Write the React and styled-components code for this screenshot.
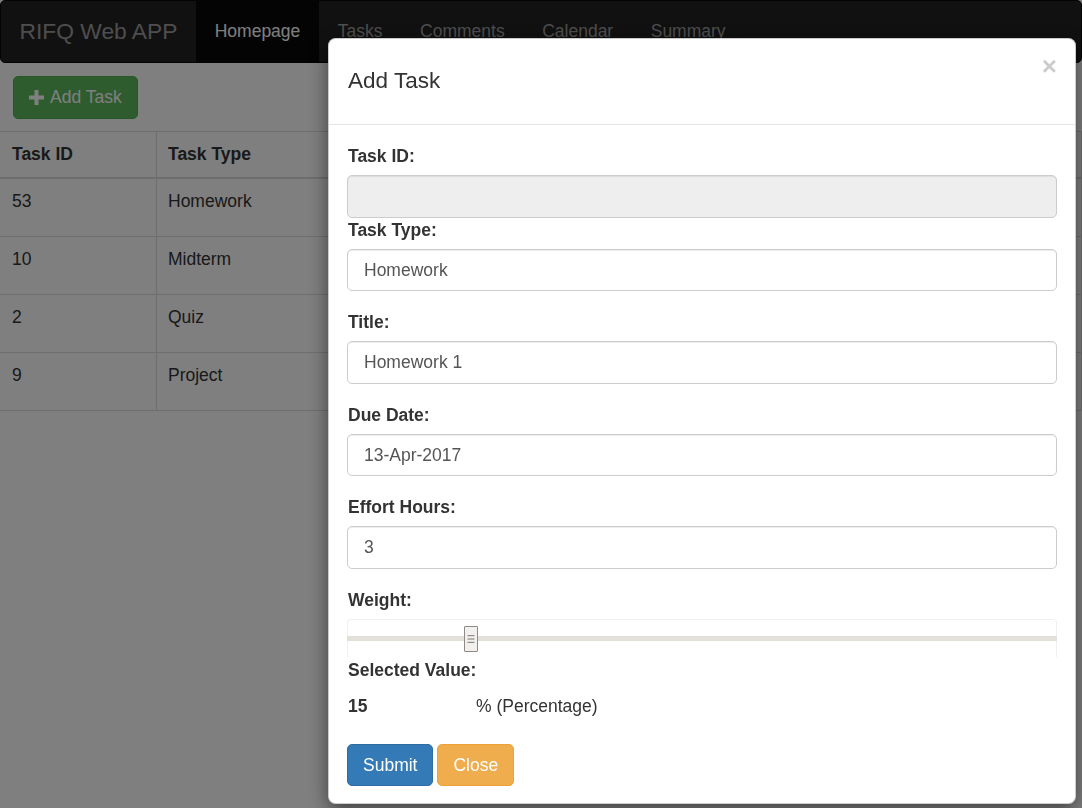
import React from "react";
import styled, { createGlobalStyle } from "styled-components";

const Global = createGlobalStyle`
  html, body {
    margin: 0;
    padding: 0;
    height: 100%;
    overflow: hidden;
  }
  body {
    font-family: "Liberation Sans", Arial, Helvetica, sans-serif;
    font-size: 17.5px;
    line-height: 1.42857;
    color: #333;
    background: #fff;
  }
  * { box-sizing: border-box; }
`;

const Navbar = styled.nav`
  display: flex;
  align-items: stretch;
  height: 63px;
  background: #222;
  border: 1px solid #080808;
  border-radius: 5px;
`;

const Brand = styled.a`
  display: flex;
  align-items: center;
  padding: 0 18.5px;
  font-size: 22.8px;
  color: #9d9d9d;
  text-decoration: none;
`;

const NavLink = styled.a`
  display: flex;
  align-items: center;
  padding: 0 18.75px;
  font-size: 17.5px;
  text-decoration: none;
  color: ${(p) => (p.$active ? "#fff" : "#9d9d9d")};
  background: ${(p) => (p.$active ? "#080808" : "transparent")};
`;

const Toolbar = styled.div`
  display: flex;
  padding: 13px 13px 12px;
`;

const Button = styled.button`
  display: inline-flex;
  align-items: center;
  gap: 6px;
  height: 42.5px;
  padding: 7.5px 15px;
  font-family: inherit;
  font-size: 17.5px;
  line-height: 25px;
  border-radius: 5px;
  color: #fff;
  cursor: pointer;
  border: 1px solid ${(p) => p.$border};
  background: ${(p) => p.$bg};
`;

const Table = styled.table`
  width: 100%;
  border-collapse: collapse;
  border-top: 1px solid #ddd;
`;

const Th = styled.th`
  text-align: left;
  padding: 10px 10px 10px 11.5px;
  line-height: 25px;
  font-weight: bold;
  border: 1px solid #ddd;
  border-bottom-width: 2px;
  width: ${(p) => p.$w || "auto"};
  white-space: nowrap;
  &:first-child { border-left: none; padding-left: 12px; }
`;

const Td = styled.td`
  vertical-align: top;
  padding: 10px 10px 22px 11.5px;
  line-height: 25px;
  border: 1px solid #ddd;
  white-space: nowrap;
  &:first-child { border-left: none; padding-left: 12px; }
`;

const Backdrop = styled.div`
  position: fixed;
  inset: 0;
  background: rgba(0, 0, 0, 0.5);
`;

const ModalWrap = styled.div`
  position: fixed;
  inset: 0;
  display: flex;
  align-items: flex-start;
  padding: 38px 0 0 328px;
`;

const ModalContent = styled.div`
  width: 748px;
  background: #fff;
  border: 1px solid rgba(0, 0, 0, 0.2);
  border-radius: 7.5px;
  box-shadow: 0 6px 19px rgba(0, 0, 0, 0.5);
`;

const ModalHeader = styled.div`
  display: flex;
  justify-content: space-between;
  align-items: flex-start;
  padding: 18px 19px 18px 19px;
  border-bottom: 1px solid #e5e5e5;
`;

const ModalTitle = styled.h4`
  margin: 11px 0 13px;
  font-size: 22.5px;
  line-height: 25px;
  font-weight: 500;
  color: #333;
`;

const CloseX = styled.button`
  margin-top: -4px;
  margin-right: -1px;
  padding: 0;
  border: 0;
  background: transparent;
  font-family: inherit;
  font-size: 26px;
  font-weight: bold;
  line-height: 1;
  color: #000;
  opacity: 0.2;
  text-shadow: 0 1px 0 #fff;
  cursor: pointer;
`;

const ModalBody = styled.div`
  padding: 18.75px 18px 17px;
`;

const FormGroup = styled.div`
  margin-bottom: ${(p) => (p.$tight ? "0" : "18.75px")};
`;

const Label = styled.label`
  display: block;
  margin-bottom: 6.25px;
  padding-left: 1px;
  font-weight: bold;
  line-height: 25px;
  color: #333;
`;

const Input = styled.input`
  display: block;
  width: 100%;
  height: 42.5px;
  padding: 7.5px 15px 7.5px 16px;
  font-family: inherit;
  font-size: 17.5px;
  line-height: 25px;
  color: #555;
  background: ${(p) => (p.disabled ? "#eee" : "#fff")};
  border: 1px solid #ccc;
  border-radius: 5px;
  box-shadow: inset 0 1px 1px rgba(0, 0, 0, 0.075);
  outline: none;
`;

const SliderBox = styled.div`
  position: relative;
  height: 38px;
  margin-bottom: 1px;
  border: 1px solid #f0f0f0;
  border-bottom: none;
  border-radius: 4px 4px 0 0;
  padding-top: 16px;
`;

const Track = styled.div`
  height: 5px;
  margin: 0 -1px;
  background: #e3dfd9;
`;

const Handle = styled.div`
  position: absolute;
  top: 6px;
  width: 14px;
  height: 26px;
  display: flex;
  align-items: center;
  justify-content: center;
  background: #f2f0ee;
  border: 1px solid #8f8a85;
  border-radius: 1px;
`;

const ValueRow = styled.div`
  display: flex;
  margin-top: 11px;
  padding-left: 1px;
  line-height: 25px;
`;

const ValueNum = styled.span`
  width: 128px;
  font-weight: bold;
`;

const Actions = styled.div`
  display: flex;
  gap: 4px;
  margin-top: 25px;
`;

const tasks = [
  { id: 53, type: "Homework", title: "Homework 1", due: "13-Apr-2017", hours: 3, weight: 15 },
  { id: 10, type: "Midterm", title: "Midterm 1", due: "20-Apr-2017", hours: 10, weight: 25 },
  { id: 2, type: "Quiz", title: "Quiz 1", due: "22-Apr-2017", hours: 2, weight: 5 },
  { id: 9, type: "Project", title: "Project 1", due: "30-Apr-2017", hours: 20, weight: 30 },
];

const PlusIcon = () => (
  <svg width="15" height="15" viewBox="0 0 15 15" aria-hidden="true">
    <rect x="5.5" y="0" width="4" height="15" fill="currentColor" />
    <rect x="0" y="5.5" width="15" height="4" fill="currentColor" />
  </svg>
);

const GripIcon = () => (
  <svg width="8" height="10" viewBox="0 0 8 10" aria-hidden="true">
    <rect x="0.5" y="1" width="7" height="1.2" fill="#8f8a85" />
    <rect x="0.5" y="4.4" width="7" height="1.2" fill="#8f8a85" />
    <rect x="0.5" y="7.8" width="7" height="1.2" fill="#8f8a85" />
  </svg>
);

export default function App() {
  const weight = 15;
  return (
    <>
      <Global />
      <Navbar>
        <Brand href="#">RIFQ Web APP</Brand>
        <NavLink $active href="#">Homepage</NavLink>
        <NavLink href="#">Tasks</NavLink>
        <NavLink href="#">Comments</NavLink>
        <NavLink href="#">Calendar</NavLink>
        <NavLink href="#">Summary</NavLink>
      </Navbar>
      <Toolbar>
        <Button $bg="#5cb85c" $border="#4cae4c">
          <PlusIcon />
          Add Task
        </Button>
      </Toolbar>
      <Table>
        <thead>
          <tr>
            <Th $w="156px">Task ID</Th>
            <Th $w="220px">Task Type</Th>
            <Th>Title</Th>
            <Th>Due Date</Th>
            <Th>Effort Hours</Th>
            <Th>Weight</Th>
            <Th>Actions</Th>
          </tr>
        </thead>
        <tbody>
          {tasks.map((t) => (
            <tr key={t.id}>
              <Td>{t.id}</Td>
              <Td>{t.type}</Td>
              <Td>{t.title}</Td>
              <Td>{t.due}</Td>
              <Td>{t.hours}</Td>
              <Td>{t.weight}%</Td>
              <Td>Edit</Td>
            </tr>
          ))}
        </tbody>
      </Table>

      <Backdrop />
      <ModalWrap>
        <ModalContent>
          <ModalHeader>
            <ModalTitle>Add Task</ModalTitle>
            <CloseX aria-label="Close">×</CloseX>
          </ModalHeader>
          <ModalBody>
            <FormGroup $tight>
              <Label>Task ID:</Label>
              <Input disabled defaultValue="" />
            </FormGroup>
            <FormGroup>
              <Label>Task Type:</Label>
              <Input defaultValue="Homework" />
            </FormGroup>
            <FormGroup>
              <Label>Title:</Label>
              <Input defaultValue="Homework 1" />
            </FormGroup>
            <FormGroup>
              <Label>Due Date:</Label>
              <Input defaultValue="13-Apr-2017" />
            </FormGroup>
            <FormGroup>
              <Label>Effort Hours:</Label>
              <Input defaultValue="3" />
            </FormGroup>
            <FormGroup $tight>
              <Label>Weight:</Label>
              <SliderBox>
                <Track />
                <Handle style={{ left: `${(weight / 100) * 710 + 9}px` }}>
                  <GripIcon />
                </Handle>
              </SliderBox>
            </FormGroup>
            <FormGroup $tight>
              <Label>Selected Value:</Label>
              <ValueRow>
                <ValueNum>{weight}</ValueNum>
                <span>% (Percentage)</span>
              </ValueRow>
            </FormGroup>
            <Actions>
              <Button $bg="#337ab7" $border="#2e6da4">Submit</Button>
              <Button $bg="#f0ad4e" $border="#eea236">Close</Button>
            </Actions>
          </ModalBody>
        </ModalContent>
      </ModalWrap>
    </>
  );
}
